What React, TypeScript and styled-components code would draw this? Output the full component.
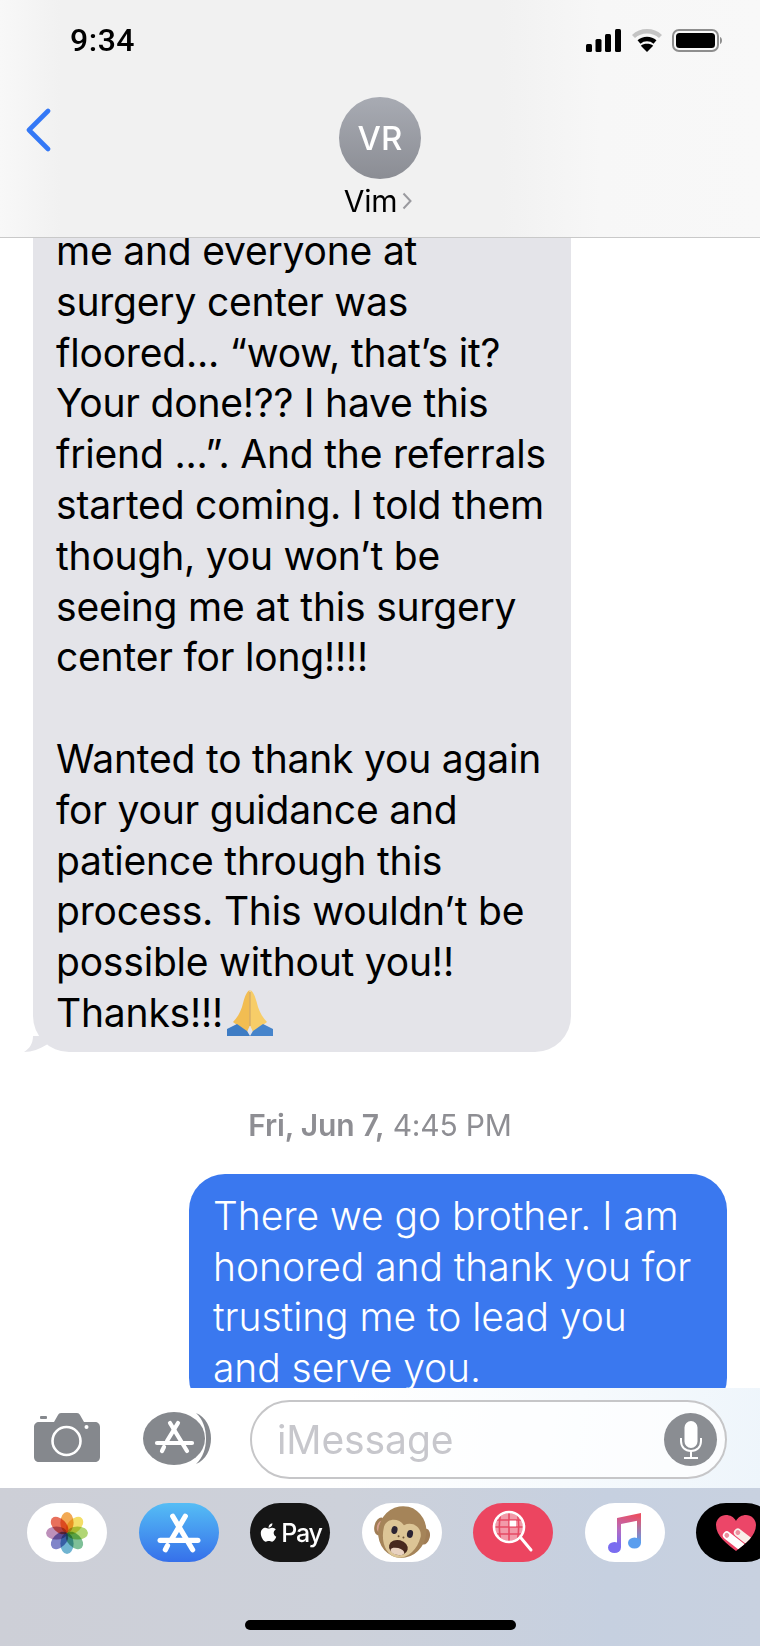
import React from 'react'
import styled, { createGlobalStyle } from 'styled-components'
import { FaApple } from 'react-icons/fa'

const GlobalStyle = createGlobalStyle`
    html, body {
        margin: 0;
        padding: 0;
        background: #ffffff;
    }
    * {
        box-sizing: border-box;
    }
`

const Screen = styled.div`
    width: 760px;
    height: 1646px;
    display: flex;
    flex-direction: column;
    overflow: hidden;
    background: #ffffff;
    font-family: Inter, 'Liberation Sans', sans-serif;
    color: #000000;
`

const Header = styled.header`
    height: 238px;
    flex: none;
    display: flex;
    flex-direction: column;
    background: linear-gradient(90deg, #f8f8f8 0, #f1f1f1 60px, #f1f1f1 500px, #f7f7f7 600px, #f8f8f8 100%);
    border-bottom: 1px solid #c9c9c9;
`

const StatusBar = styled.div`
    height: 97px;
    flex: none;
    display: flex;
    justify-content: space-between;
    align-items: flex-start;
    padding: 22px 38px 0 70px;
`

const Clock = styled.div`
    font-family: Roboto, 'Liberation Sans', sans-serif;
    font-size: 32px;
    line-height: 36px;
    font-weight: 500;
    letter-spacing: 0.5px;
`

const StatusIcons = styled.div`
    display: flex;
    align-items: center;
    gap: 10.5px;
    padding-top: 7px;
`

const NavRow = styled.div`
    position: relative;
    flex: 1;
    display: flex;
    flex-direction: column;
    align-items: center;
`

const BackButton = styled.svg`
    position: absolute;
    left: 25px;
    top: 11px;
`

const Avatar = styled.div`
    width: 82px;
    height: 82px;
    border-radius: 50%;
    background: linear-gradient(180deg, #a8abb3, #8b8d94);
    color: #ffffff;
    display: flex;
    align-items: center;
    justify-content: center;
    font-size: 33px;
    font-weight: 500;
`

const ContactName = styled.div`
    margin: 5px 4px 0 0;
    display: flex;
    align-items: center;
    gap: 5px;
    font-size: 30px;
    line-height: 34px;
    letter-spacing: -0.2px;
`

const Messages = styled.main`
    flex: 1;
    min-height: 0;
    overflow: hidden;
    display: flex;
    flex-direction: column;
`

const Bubble = styled.div<{ $sent?: boolean }>`
    position: relative;
    flex: none;
    width: 538px;
    font-size: 39px;
    line-height: 50.8px;
    letter-spacing: ${(p) => (p.$sent ? '-0.05px' : '-0.2px')};
    white-space: nowrap;
    padding: ${(p) => (p.$sent ? '17px 25px 20px 24px' : '0 24px 13px 23px')};
    margin: ${(p) => (p.$sent ? '0 33px 0 189px' : '-12px 0 0 33px')};
    border-radius: ${(p) => (p.$sent ? '36px' : '0 0 36px 36px')};
    background: ${(p) => (p.$sent ? '#3a78ef' : '#e4e4e9')};
    color: ${(p) => (p.$sent ? '#ffffff' : '#000000')};
    font-weight: ${(p) => (p.$sent ? 350 : 400)};
`

const Line = styled.div`
    min-height: 50.8px;
`

const Tail = styled.svg`
    position: absolute;
    left: -9px;
    bottom: 0;
`

const Praying = styled.svg`
    display: inline-block;
    vertical-align: -9px;
    margin: -10px 0 0 4px;
`

const Timestamp = styled.div`
    flex: none;
    margin: 55px 0 31px;
    text-align: center;
    font-size: 30px;
    line-height: 36px;
    color: #8e8e93;
    letter-spacing: -0.2px;
`

const TimestampDay = styled.span`
    font-weight: 600;
`

const InputBar = styled.div`
    height: 100px;
    flex: none;
    display: flex;
    align-items: flex-start;
    padding: 12px 33px 0 34px;
    background: linear-gradient(100deg, #ffffff 45%, #f6fafd 75%, #eef5fb 100%);
`

const CameraIcon = styled.svg`
    flex: none;
    margin-top: 13px;
`

const AppsIcon = styled.svg`
    flex: none;
    margin: 12px 0 0 43px;
`

const InputField = styled.div`
    flex: none;
    width: 477px;
    height: 79px;
    margin-left: 36px;
    border: 2px solid #c6c6c8;
    border-radius: 40px;
    background: rgba(255, 255, 255, 0.7);
    display: flex;
    align-items: center;
    justify-content: space-between;
    padding: 0 8px 0 25px;
`

const Placeholder = styled.div`
    font-size: 39px;
    letter-spacing: -0.1px;
    color: #c7c7cc;
`

const MicButton = styled.div`
    width: 53px;
    height: 53px;
    border-radius: 50%;
    background: #8a8d92;
    display: flex;
    align-items: center;
    justify-content: center;
`

const Drawer = styled.div`
    height: 158px;
    flex: none;
    display: flex;
    flex-direction: column;
    justify-content: space-between;
    background: linear-gradient(90deg, #cdcfd7 0, #cdd1da 45%, #c6d0e0 80%, #c8d1e0 100%);
    padding-top: 15px;
`

const AppRow = styled.div`
    display: flex;
    gap: 31.5px;
    padding-left: 27px;
`

const AppPill = styled.div<{ $bg: string }>`
    flex: none;
    width: 80px;
    height: 59px;
    border-radius: 30px / 29.5px;
    background: ${(p) => p.$bg};
    display: flex;
    align-items: center;
    justify-content: center;
    overflow: hidden;
`

const ApplePay = styled.div`
    display: flex;
    align-items: center;
    gap: 2px;
    color: #ffffff;
    font-size: 25px;
    font-weight: 500;
    letter-spacing: -1.2px;
`

const HomeIndicator = styled.div`
    align-self: center;
    width: 271px;
    height: 10px;
    margin-bottom: 16px;
    border-radius: 5px;
    background: #000000;
`

const greyLines = [
    'me and everyone at',
    'surgery center was',
    'floored... “wow, that’s it?',
    'Your done!?? I have this',
    'friend ...”. And the referrals',
    'started coming. I told them',
    'though, you won’t be',
    'seeing me at this surgery',
    'center for long!!!!',
    '',
    'Wanted to thank you again',
    'for your guidance and',
    'patience through this',
    'process. This wouldn’t be',
    'possible without you!!',
]

const blueLines = [
    'There we go brother. I am',
    'honored and thank you for',
    'trusting me to lead you',
    'and serve you.',
]

// the "A" of the App Store: two crossed sticks, a crossbar and a broken left leg
function AppStoreGlyph({ color, width }: { color: string; width: number }) {
    return (
        <svg width={width} height={width} viewBox="0 0 42 42" fill="none" stroke={color} strokeWidth="5" strokeLinecap="round">
            <path d="M15 5 L34 37" />
            <path d="M27 5 L14 27" />
            <path d="M10 33 L8 37" />
            <path d="M3 28 H39" />
        </svg>
    )
}

function PhotosIcon() {
    const petals = [
        { a: 0, c: '#f09a36' },
        { a: 45, c: '#f2d94c' },
        { a: 90, c: '#a3cf5c' },
        { a: 135, c: '#68b586' },
        { a: 180, c: '#57a7c9' },
        { a: 225, c: '#6a6fc0' },
        { a: 270, c: '#b27cae' },
        { a: 315, c: '#e4573f' },
    ]
    return (
        <svg width="42" height="42" viewBox="0 0 42 42">
            {petals.map((p) => (
                <ellipse
                    key={p.a}
                    cx="21"
                    cy="10.5"
                    rx="6.6"
                    ry="10.5"
                    fill={p.c}
                    opacity="0.85"
                    transform={`rotate(${p.a} 21 21)`}
                    style={{ mixBlendMode: 'multiply' }}
                />
            ))}
        </svg>
    )
}

function MonkeyIcon() {
    return (
        <svg width="56" height="56" viewBox="0 0 56 56">
            <g transform="rotate(14 28 28)">
                <ellipse cx="5" cy="27" rx="5.5" ry="9" fill="#a07d55" />
                <ellipse cx="5.5" cy="27" rx="3.4" ry="6" fill="#d8a08e" />
                <ellipse cx="51" cy="26" rx="5" ry="8" fill="#a07d55" />
                <ellipse cx="28" cy="27" rx="24" ry="26" fill="#a58459" />
                <path d="M9 26 C10 17 21 14 28 20 C35 14 46 17 47 27 C47 42 38 53 28 53 C18 53 9 42 9 26Z" fill="#dcc596" />
                <ellipse cx="20" cy="27" rx="3" ry="4" fill="#2b2433" />
                <ellipse cx="36" cy="27" rx="3" ry="4" fill="#2b2433" />
                <circle cx="25.5" cy="32" r="1" fill="#6d5436" />
                <circle cx="30.5" cy="32" r="1" fill="#6d5436" />
                <ellipse cx="28" cy="43" rx="9.5" ry="7.5" fill="#47291f" />
                <ellipse cx="28" cy="47" rx="7" ry="3.5" fill="#e9d2c0" />
            </g>
        </svg>
    )
}

function GlobeSearchIcon() {
    return (
        <svg width="44" height="46" viewBox="0 0 44 46" fill="none">
            <defs>
                <clipPath id="globe-clip">
                    <circle cx="18" cy="17" r="14" />
                </clipPath>
            </defs>
            <circle cx="18" cy="17" r="14" fill="#f29aa9" />
            <g clipPath="url(#globe-clip)" stroke="#e64a64" strokeWidth="1.6">
                <path d="M3 10 H33 M3 17 H33 M3 24 H33 M10 2 C8 11 8 23 10 32 M18 2 V32 M26 2 C28 11 28 23 26 32" />
            </g>
            <rect x="18.6" y="10.6" width="6.4" height="5.8" fill="#ffffff" />
            <circle cx="18" cy="17" r="15" stroke="#ffffff" strokeWidth="2.6" />
            <path d="M30 28 L40 40" stroke="#ffffff" strokeWidth="3" strokeLinecap="round" />
        </svg>
    )
}

function MusicIcon() {
    return (
        <svg width="34" height="42" viewBox="0 0 34 42">
            <defs>
                <linearGradient id="music-fill" x1="0.5" y1="0" x2="0.3" y2="1">
                    <stop offset="0" stopColor="#ea4f62" />
                    <stop offset="0.55" stopColor="#b56bc0" />
                    <stop offset="1" stopColor="#7a6cf0" />
                </linearGradient>
                <linearGradient id="music-right" x1="0" y1="0" x2="0" y2="1">
                    <stop offset="0" stopColor="#e4566e" />
                    <stop offset="1" stopColor="#5a9eee" />
                </linearGradient>
            </defs>
            <path d="M9 6 L33 1 V8 L13 12 V35 H9Z" fill="url(#music-fill)" />
            <ellipse cx="6.5" cy="35.5" rx="6.5" ry="5.5" fill="#7a6cf0" />
            <path d="M29 6 H33 V31 H29Z" fill="url(#music-right)" />
            <ellipse cx="26.5" cy="31" rx="6.5" ry="5.5" fill="#5a9eee" />
        </svg>
    )
}

function HeartIcon() {
    return (
        <svg width="42" height="38" viewBox="0 0 42 38">
            <defs>
                <clipPath id="heart-clip">
                    <path d="M21 37 C12 30 1 22 1 11 C1 5 6 1 11 1 C15 1 19 3 21 7 C23 3 27 1 31 1 C36 1 41 5 41 11 C41 22 30 30 21 37Z" />
                </clipPath>
            </defs>
            <path d="M21 37 C12 30 1 22 1 11 C1 5 6 1 11 1 C15 1 19 3 21 7 C23 3 27 1 31 1 C36 1 41 5 41 11 C41 22 30 30 21 37Z" fill="#ec4668" />
            <g clipPath="url(#heart-clip)">
                <g transform="rotate(38 25 24)">
                    <rect x="16" y="17" width="30" height="8" rx="4" fill="#f9eeea" />
                    <circle cx="20" cy="21" r="2.4" fill="#ec8f9e" />
                    <rect x="9" y="26" width="34" height="8" rx="4" fill="#ffffff" />
                    <circle cx="13" cy="30" r="2.4" fill="#ec8f9e" />
                </g>
            </g>
        </svg>
    )
}

export default function App() {
    return (
        <Screen>
            <GlobalStyle />
            <Header>
                <StatusBar>
                    <Clock>9:34</Clock>
                    <StatusIcons>
                        <svg width="35" height="23" viewBox="0 0 35 23" fill="#000000">
                            <rect x="0" y="15" width="6" height="8" rx="1.5" />
                            <rect x="9.5" y="10" width="6" height="13" rx="1.5" />
                            <rect x="19" y="5" width="6" height="18" rx="1.5" />
                            <rect x="29" y="0" width="6" height="23" rx="1.5" />
                        </svg>
                        <svg width="30" height="23" viewBox="0 0 30 23" fill="none" strokeLinecap="butt">
                            <path d="M1.5 7.5 C9 0.5 21 0.5 28.5 7.5" stroke="#c4c4c4" strokeWidth="4.4" />
                            <path d="M7 13 C11.5 9 18.5 9 23 13" stroke="#000000" strokeWidth="4.4" />
                            <path d="M15 23 L8.8 16.8 C12 14.2 18 14.2 21.2 16.8Z" fill="#000000" />
                        </svg>
                        <svg width="50" height="23" viewBox="0 0 50 23" fill="none">
                            <rect x="1" y="1" width="45" height="21" rx="6" stroke="#8e8e8e" strokeWidth="2" />
                            <rect x="4" y="4" width="39" height="15" rx="3.5" fill="#000000" />
                            <path d="M48 8 C49.5 8.6 50 10 50 11.5 C50 13 49.5 14.4 48 15Z" fill="#8e8e8e" />
                        </svg>
                    </StatusIcons>
                </StatusBar>
                <NavRow>
                    <BackButton width="26" height="44" viewBox="0 0 26 44" fill="none">
                        <path d="M23 3 L4 22 L23 41" stroke="#3478f6" strokeWidth="4.6" strokeLinecap="round" strokeLinejoin="round" />
                    </BackButton>
                    <Avatar>VR</Avatar>
                    <ContactName>
                        Vim
                        <svg width="10" height="18" viewBox="0 0 10 18" fill="none">
                            <path d="M1.5 1.5 L8.5 9 L1.5 16.5" stroke="#9a9a9f" strokeWidth="2" />
                        </svg>
                    </ContactName>
                </NavRow>
            </Header>
            <Messages>
                <Bubble>
                    {greyLines.map((text, i) => (
                        <Line key={i}>{text}</Line>
                    ))}
                    <Line>
                        Thanks!!!
                        <Praying width="46" height="46" viewBox="0 0 46 46">
                            <path d="M22.6 0 C19 2 17 9 15 17 C13 23 10 28 6 32 L10 35 L20 42 L22.6 36Z" fill="#f2bd52" />
                            <path d="M23.4 0 C27 2 29 9 31 17 C33 23 36 28 40 32 L36 35 L26 42 L23.4 36Z" fill="#f7cd68" />
                            <path d="M23 2 V36" stroke="#cf9534" strokeWidth="1" />
                            <path d="M0 46 V39 L10 34 L20 41 L23 46Z" fill="#3e7cc4" />
                            <path d="M46 46 V39 L36 34 L26 41 L23 46Z" fill="#4684cb" />
                        </Praying>
                    </Line>
                    <Tail width="23" height="16" viewBox="0 0 23 16">
                        <path d="M9 0 C9 8 5 13 0 16 C8 16 16 13 23 8.5 L23 0Z" fill="#e4e4e9" />
                    </Tail>
                </Bubble>
                <Timestamp>
                    <TimestampDay>Fri, Jun 7,</TimestampDay> 4:45 PM
                </Timestamp>
                <Bubble $sent>
                    {blueLines.map((text) => (
                        <Line key={text}>{text}</Line>
                    ))}
                </Bubble>
            </Messages>
            <InputBar>
                <CameraIcon width="66" height="49" viewBox="0 0 66 49">
                    <path
                        d="M5 9 H20 L24 2 C24.6 0.8 25.6 0 27 0 H43 C44.4 0 45.4 0.8 46 2 L50 9 H61 C63.8 9 66 11 66 14 V44 C66 47 63.8 49 61 49 H5 C2.2 49 0 47 0 44 V14 C0 11 2.2 9 5 9Z"
                        fill="#85888d"
                    />
                    <rect x="6" y="3" width="7" height="3" rx="1" fill="#85888d" />
                    <circle cx="32.5" cy="28" r="14" fill="none" stroke="#ffffff" strokeWidth="2.6" />
                    <circle cx="52.5" cy="14" r="2" fill="#ffffff" />
                </CameraIcon>
                <AppsIcon width="71" height="53" viewBox="0 0 71 53">
                    <path d="M53 1 C63 5 68 16 68 26.5 C68 37 63 48 53 52 C60 46 63 36 63 26.5 C63 17 60 7 53 1Z" fill="#85888d" />
                    <ellipse cx="31" cy="26.5" rx="31" ry="26.5" fill="#85888d" />
                    <g fill="none" stroke="#ffffff" strokeWidth="4.2" strokeLinecap="round">
                        <path d="M27 11 L44 39" />
                        <path d="M35 11 L24 29" />
                        <path d="M21 35 L19 39" />
                        <path d="M14 31 H49" />
                    </g>
                </AppsIcon>
                <InputField>
                    <Placeholder>iMessage</Placeholder>
                    <MicButton>
                        <svg width="22" height="38" viewBox="0 0 22 38" fill="none" stroke="#ffffff" strokeWidth="2">
                            <rect x="5.5" y="1" width="11" height="25" rx="5.5" fill="#ffffff" />
                            <path d="M1 17 V20 C1 26 5 30 11 30 C17 30 21 26 21 20 V17" />
                            <path d="M11 30 V36 M4 37 H18" />
                        </svg>
                    </MicButton>
                </InputField>
            </InputBar>
            <Drawer>
                <AppRow>
                    <AppPill $bg="#ffffff">
                        <PhotosIcon />
                    </AppPill>
                    <AppPill $bg="linear-gradient(180deg, #55bdf5, #3670ea)">
                        <AppStoreGlyph color="#ffffff" width={44} />
                    </AppPill>
                    <AppPill $bg="#161616">
                        <ApplePay>
                            <FaApple size={21} />
                            Pay
                        </ApplePay>
                    </AppPill>
                    <AppPill $bg="#ffffff">
                        <MonkeyIcon />
                    </AppPill>
                    <AppPill $bg="#ec4560">
                        <GlobeSearchIcon />
                    </AppPill>
                    <AppPill $bg="#ffffff">
                        <MusicIcon />
                    </AppPill>
                    <AppPill $bg="#000000">
                        <HeartIcon />
                    </AppPill>
                </AppRow>
                <HomeIndicator />
            </Drawer>
        </Screen>
    )
}
